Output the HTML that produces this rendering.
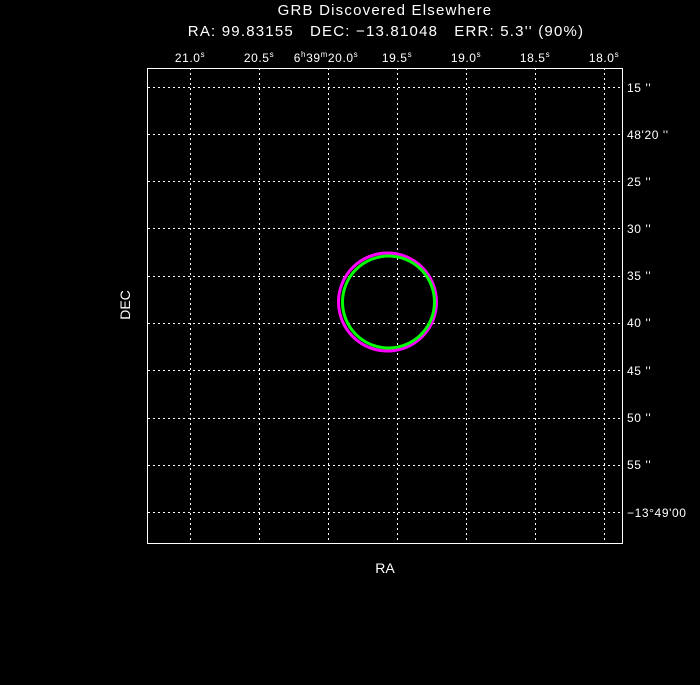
<!DOCTYPE html>
<html><head><style>
body{margin:0;background:#000;width:700px;height:680px;overflow:hidden}
svg text{font-family:"Liberation Sans",sans-serif;fill:#fff;white-space:pre}
</style></head><body>
<svg width="700" height="680" xmlns="http://www.w3.org/2000/svg">
<text x="385" y="15" font-size="15" letter-spacing="1.2" text-anchor="middle">GRB Discovered Elsewhere</text>
<text x="386" y="36" font-size="15" letter-spacing="1.2" text-anchor="middle" xml:space="preserve">RA: 99.83155   DEC: −13.81048   ERR: 5.3'' (90%)</text>
<g font-size="12" letter-spacing="0.6" text-anchor="middle">
<text x="190" y="62">21.0<tspan font-size="8" dy="-5">s</tspan></text>
<text x="259" y="62">20.5<tspan font-size="8" dy="-5">s</tspan></text>
<text x="326" y="62">6<tspan font-size="8" dy="-5">h</tspan><tspan dy="5">39</tspan><tspan font-size="8" dy="-5">m</tspan><tspan dy="5">20.0</tspan><tspan font-size="8" dy="-5">s</tspan></text>
<text x="397" y="62">19.5<tspan font-size="8" dy="-5">s</tspan></text>
<text x="466" y="62">19.0<tspan font-size="8" dy="-5">s</tspan></text>
<text x="535" y="62">18.5<tspan font-size="8" dy="-5">s</tspan></text>
<text x="604" y="62">18.0<tspan font-size="8" dy="-5">s</tspan></text>
</g>
<g font-size="12" letter-spacing="0.6">
<text x="627" y="92">15 ''</text>
<text x="627" y="139">48'20 ''</text>
<text x="627" y="186">25 ''</text>
<text x="627" y="233">30 ''</text>
<text x="627" y="280">35 ''</text>
<text x="627" y="327">40 ''</text>
<text x="627" y="375">45 ''</text>
<text x="627" y="422">50 ''</text>
<text x="627" y="469">55 ''</text>
<text x="627" y="517">−13°49'00</text>
</g>
<g stroke="#fff" stroke-width="1" stroke-dasharray="2,3">
<line x1="190.5" y1="68" x2="190.5" y2="543"/><line x1="259.5" y1="68" x2="259.5" y2="543"/>
<line x1="328.5" y1="68" x2="328.5" y2="543"/><line x1="397.5" y1="68" x2="397.5" y2="543"/>
<line x1="466.5" y1="68" x2="466.5" y2="543"/><line x1="535.5" y1="68" x2="535.5" y2="543"/>
<line x1="604.5" y1="68" x2="604.5" y2="543"/>
<line x1="148" y1="87.5" x2="622" y2="87.5"/><line x1="148" y1="134.5" x2="622" y2="134.5"/>
<line x1="148" y1="181.5" x2="622" y2="181.5"/><line x1="148" y1="228.5" x2="622" y2="228.5"/>
<line x1="148" y1="276.5" x2="622" y2="276.5"/><line x1="148" y1="323.5" x2="622" y2="323.5"/>
<line x1="148" y1="370.5" x2="622" y2="370.5"/><line x1="148" y1="418.5" x2="622" y2="418.5"/>
<line x1="148" y1="465.5" x2="622" y2="465.5"/><line x1="148" y1="512.5" x2="622" y2="512.5"/>
</g>
<rect x="147.5" y="68.5" width="475" height="475" fill="none" stroke="#fff"/>
<circle cx="387.5" cy="302" r="49" fill="none" stroke="#f0f" stroke-width="3"/>
<circle cx="388.5" cy="302" r="46" fill="none" stroke="#0f0" stroke-width="3"/>
<text x="385" y="573" font-size="14" text-anchor="middle">RA</text>
<text x="130" y="305" font-size="14" text-anchor="middle" transform="rotate(-90 130 305)">DEC</text>
</svg>
</body></html>
